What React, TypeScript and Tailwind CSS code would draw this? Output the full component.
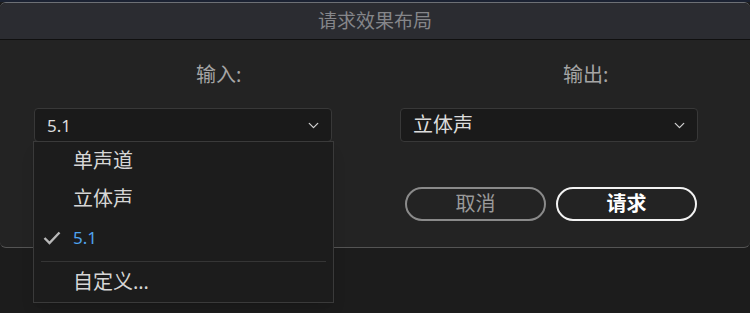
import { ChevronDown } from "lucide-react";

const font = { fontFamily: '"Noto Sans", "Noto Sans CJK SC", sans-serif' };

function Select({ value, latin }: { value: string; latin?: boolean }) {
  return (
    <div className="flex h-[34px] items-center justify-between rounded-[4px] border border-[#383838] bg-[#1a1a1a] pl-[12px] pr-[9px]">
      <span
        className={
          latin
            ? "text-[17px] leading-none text-[#dcdcdc]"
            : "text-[20px] leading-none text-[#dcdcdc]"
        }
      >
        {value}
      </span>
      <ChevronDown size={17} strokeWidth={1.8} className="text-[#d0d0d0]" />
    </div>
  );
}

function Menu() {
  return (
    <div className="absolute left-[-1px] top-[33px] z-10 h-[162px] w-[301px] border border-[#3a3a3a] bg-[#1c1c1c] shadow-lg">
      <div className="flex h-[37px] items-center pl-[39px] text-[20px] text-[#d6d6d6]">
        单声道
      </div>
      <div className="flex h-[39px] items-center pl-[39px] text-[20px] text-[#d6d6d6]">
        立体声
      </div>
      <div className="relative flex h-[39px] items-center pl-[39px] text-[17px] text-[#4fa3ee]">
        <svg
          className="absolute left-[9px] top-[13px]"
          width="18"
          height="14"
          viewBox="0 0 18 14"
        >
          <polyline
            points="1.5,7 6.5,12 16.5,1.5"
            fill="none"
            stroke="#b8b8b8"
            strokeWidth="2.4"
          />
        </svg>
        5.1
      </div>
      <div className="mx-[7px] mt-[4px] h-px bg-[#353535]" />
      <div className="flex h-[39px] items-center pl-[39px] text-[20px] text-[#d6d6d6]">
        自定义…
      </div>
    </div>
  );
}

export default function App() {
  return (
    <div className="relative h-[313px] w-[750px] overflow-hidden bg-[#1c1c1c]" style={font}>
      <div className="h-[2px] bg-[#1b2232]" />
      <div className="rounded-[6px] border-t border-b border-t-[#6d7075] border-b-[#545454] bg-[#232323]">
        <div className="flex h-[36px] items-center justify-center rounded-t-[6px] bg-[#2b2c31] text-[19px] text-[#85868a]">
          请求效果布局
        </div>
        <div className="h-px bg-[#101010]" />
        <div className="grid h-[207px] grid-cols-[298px_298px] gap-x-[68px] pl-[34px] pt-[25px]">
          <div>
            <div className="pl-[162px] text-[20px] leading-[20px] text-[#a5a5a5]">输入:</div>
            <div className="relative mt-[23px]">
              <Select value="5.1" latin />
              <Menu />
            </div>
          </div>
          <div>
            <div className="pl-[163px] text-[20px] leading-[20px] text-[#a5a5a5]">输出:</div>
            <div className="mt-[23px]">
              <Select value="立体声" />
            </div>
            <div className="ml-[5px] mt-[45px] flex gap-[10px]">
              <button className="flex h-[34px] w-[141px] items-center justify-center rounded-full border-2 border-[#8a8a8a] text-[20px] text-[#9a9a9a]">
                取消
              </button>
              <button className="flex h-[34px] w-[141px] items-center justify-center rounded-full border-2 border-[#f2f2f2] text-[20px] font-semibold text-white">
                请求
              </button>
            </div>
          </div>
        </div>
      </div>
    </div>
  );
}
